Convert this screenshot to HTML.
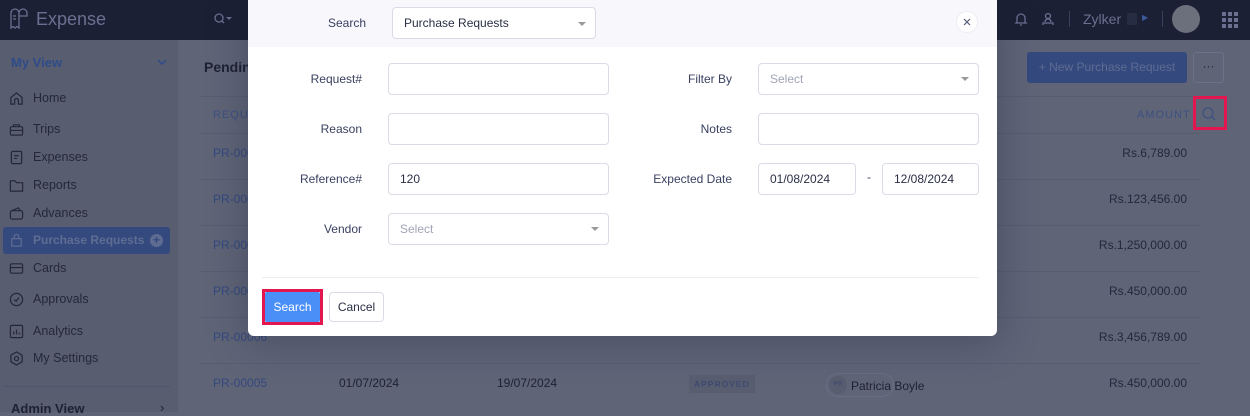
<!DOCTYPE html>
<html><head><meta charset="utf-8"><style>
*{box-sizing:border-box;margin:0;padding:0}
body{width:1250px;height:412px;overflow:hidden;position:relative;font-family:"Liberation Sans",sans-serif;background:#5f6477;font-size:12px}
.top{position:absolute;left:0;top:0;width:1250px;height:40px;background:#1b2035}
.side{position:absolute;left:0;top:40px;width:178px;height:372px;background:#585d6f}
.abs{position:absolute}
.nav{position:absolute;left:33px;color:#23283a;font-size:12.5px}
.ic{position:absolute;left:9px}
.row{position:absolute;left:200px;width:1000px;border-top:1px solid #585d70}
.pr{position:absolute;left:213px;color:#34497e;font-size:12px}
.amt{position:absolute;right:63px;color:#23283a;font-size:12px}
.modal{position:absolute;left:248px;top:0;width:749px;height:336px;background:#fff;border-radius:0 0 6px 6px;box-shadow:0 4px 40px rgba(30,35,55,.35)}
.mh{position:absolute;left:0;top:0;width:749px;height:47px;background:#f7f7fc}
.lbl{position:absolute;color:#3a4060;font-size:12px;text-align:right}
.inp{position:absolute;height:32px;border:1px solid #d9dbe6;border-radius:4px;background:#fff;font-size:12px;color:#2a2f45;padding-left:11px;line-height:30px}
.ph{color:#a1a5b5}
.car{position:absolute;right:9px;top:13px;border-left:4px solid transparent;border-right:4px solid transparent;border-top:4px solid #999}
</style></head><body>
<div class="top">
 <svg class="abs" style="left:8px;top:6px" width="24" height="26" viewBox="0 0 24 26" fill="none" stroke="#6b7090" stroke-width="1.3"><path d="M3 22V7a4 4 0 0 1 8 0v15l-2-1.5-2 1.5-2-1.5z M11 7a4 4 0 0 1 8 0v3h-8"/><path d="M5 10h3M5 13h3"/></svg>
 <div class="abs" style="left:36px;top:9px;color:#6b7090;font-size:18px">Expense</div>
 <svg class="abs" style="left:213px;top:12px" width="20" height="14" viewBox="0 0 20 14" fill="none" stroke="#6b7090" stroke-width="1.3"><circle cx="6" cy="6" r="4"/><path d="M9 9l2 2"/><path d="M13 5h6l-3 3z" fill="#6b7090" stroke="none"/></svg>
 <svg class="abs" style="left:1013px;top:11px" width="16" height="16" viewBox="0 0 16 16" fill="none" stroke="#6b7090" stroke-width="1.3"><path d="M4 11V7a4 4 0 0 1 8 0v4l1 1H3z M7 14h2"/></svg>
 <svg class="abs" style="left:1040px;top:11px" width="16" height="16" viewBox="0 0 16 16" fill="none" stroke="#6b7090" stroke-width="1.3"><circle cx="8" cy="5" r="2.5"/><path d="M3 14v-2h10v2M5 11a3 3 0 0 1 6 0"/></svg>
 <div class="abs" style="left:1069px;top:11px;width:1px;height:16px;background:#3a4060"></div>
 <div class="abs" style="left:1083px;top:11px;color:#6b7090;font-size:14px">Zylker</div>
 <div class="abs" style="left:1127px;top:13px;width:10px;height:12px;background:#262c42"></div>
 <div class="abs" style="left:1142px;top:13px;color:#3b5a9a;font-size:8px">▶</div>
 <div class="abs" style="left:1162px;top:11px;width:1px;height:16px;background:#3a4060"></div>
 <div class="abs" style="left:1172px;top:5px;width:28px;height:28px;border-radius:50%;background:#6c6f7c"></div>
 <svg class="abs" style="left:1222px;top:12px" width="16" height="16" viewBox="0 0 16 16" fill="#6b7090"><rect x="0" y="0" width="4" height="4"/><rect x="6" y="0" width="4" height="4"/><rect x="12" y="0" width="4" height="4"/><rect x="0" y="6" width="4" height="4"/><rect x="6" y="6" width="4" height="4"/><rect x="12" y="6" width="4" height="4"/><rect x="0" y="12" width="4" height="4"/><rect x="6" y="12" width="4" height="4"/><rect x="12" y="12" width="4" height="4"/></svg>
</div>
<div class="side">
 <div class="abs" style="left:11px;top:15px;color:#2f4c8a;font-weight:bold;font-size:13px">My View</div>
 <svg class="abs" style="left:157px;top:19px" width="10" height="6" viewBox="0 0 10 6" fill="none" stroke="#2f4c8a" stroke-width="1.5"><path d="M1 1l4 4 4-4"/></svg>
 <svg class="ic" style="top:51px" width="15" height="15" viewBox="0 0 16 16" fill="none" stroke="#23283a" stroke-width="1.3"><path d="M2 7l6-5 6 5v7H10v-4a2 2 0 0 0-4 0v4H2z"/></svg><div class="nav" style="top:51px">Home</div>
 <svg class="ic" style="top:82px" width="15" height="15" viewBox="0 0 16 16" fill="none" stroke="#23283a" stroke-width="1.3"><rect x="1.5" y="5" width="13" height="9" rx="1.5"/><path d="M5 5V3h6v2M1.5 9h13"/></svg><div class="nav" style="top:82px">Trips</div>
 <svg class="ic" style="top:110px" width="15" height="15" viewBox="0 0 16 16" fill="none" stroke="#23283a" stroke-width="1.3"><rect x="2.5" y="1.5" width="11" height="13" rx="1.5"/><path d="M5.5 6h5M5.5 9h3"/></svg><div class="nav" style="top:110px">Expenses</div>
 <svg class="ic" style="top:138px" width="15" height="15" viewBox="0 0 16 16" fill="none" stroke="#23283a" stroke-width="1.3"><path d="M1.5 3h5l1.5 2h6.5v9h-13z"/></svg><div class="nav" style="top:138px">Reports</div>
 <svg class="ic" style="top:166px" width="15" height="15" viewBox="0 0 16 16" fill="none" stroke="#23283a" stroke-width="1.3"><rect x="1.5" y="5" width="13" height="9" rx="2"/><path d="M3 5l7-3 2 3"/></svg><div class="nav" style="top:166px">Advances</div>
 <div class="abs" style="left:3px;top:187px;width:167px;height:27px;background:#34497e;border-radius:3px"></div>
 <svg class="ic" style="top:193px" width="15" height="15" viewBox="0 0 16 16" fill="none" stroke="#5f6c92" stroke-width="1.3"><path d="M3 6h10v8H3z M5.5 6V4a2.5 2.5 0 0 1 5 0v2"/></svg><div class="nav" style="top:193px;color:#5f6c92;font-weight:bold;font-size:12px">Purchase Requests</div>
 <div class="abs" style="left:150px;top:194px;width:13px;height:13px;border-radius:50%;background:#5f6c92;color:#34497e;font-size:12px;line-height:13px;text-align:center;font-weight:bold">+</div>
 <svg class="ic" style="top:221px" width="15" height="15" viewBox="0 0 16 16" fill="none" stroke="#23283a" stroke-width="1.3"><rect x="1.5" y="3" width="13" height="10" rx="1.5"/><path d="M1.5 7h13"/></svg><div class="nav" style="top:221px">Cards</div>
 <svg class="ic" style="top:252px" width="15" height="15" viewBox="0 0 16 16" fill="none" stroke="#23283a" stroke-width="1.3"><circle cx="8" cy="8" r="6.5"/><path d="M5.5 8l2 2 3-4"/></svg><div class="nav" style="top:252px">Approvals</div>
 <svg class="ic" style="top:284px" width="15" height="15" viewBox="0 0 16 16" fill="none" stroke="#23283a" stroke-width="1.3"><rect x="1.5" y="1.5" width="13" height="13" rx="1.5"/><path d="M5 11V8M8 11V6M11 11V9"/></svg><div class="nav" style="top:284px">Analytics</div>
 <svg class="ic" style="top:311px" width="15" height="15" viewBox="0 0 16 16" fill="none" stroke="#23283a" stroke-width="1.3"><path d="M8 1l6 3.5v7L8 15l-6-3.5v-7z"/><circle cx="8" cy="8" r="2.2"/></svg><div class="nav" style="top:311px">My Settings</div>
 <div class="abs" style="left:3px;top:346px;width:167px;border-top:1px solid #50566a"></div>
 <div class="abs" style="left:11px;top:361px;color:#1d2233;font-weight:bold;font-size:13px">Admin View</div>
 <div class="abs" style="left:160px;top:360px;color:#1d2233;font-size:13px">›</div>
</div>
<div class="abs" style="left:204px;top:59px;color:#1d2233;font-size:14px;font-weight:bold">Pending</div>
<div class="abs" style="left:1027px;top:52px;width:160px;height:31px;background:#34497e;border-radius:3px;color:#5f6c92;font-size:12px;line-height:31px;text-align:center">+ New Purchase Request</div>
<div class="abs" style="left:1193px;top:52px;width:31px;height:31px;border:1px solid #6d7286;border-radius:3px;color:#23283a;text-align:center;line-height:26px">···</div>
<div class="row" style="top:96px"></div>
<div class="abs" style="left:213px;top:109px;color:#3e5182;font-size:11px;letter-spacing:1px">REQUEST#</div>
<div class="abs" style="left:1137px;top:109px;color:#3e5182;font-size:11px;letter-spacing:1px">AMOUNT</div>
<div class="abs" style="left:1193px;top:96px;width:34px;height:34px;border:3px solid #e4164f"></div>
<svg class="abs" style="left:1201px;top:106px" width="16" height="16" viewBox="0 0 16 16" fill="none" stroke="#3e5182" stroke-width="1.3"><circle cx="7" cy="7" r="5"/><path d="M11 11l3 3"/></svg>
<div class="row" style="top:133px"></div>
<div class="pr" style="top:146px">PR-00010</div><div class="amt" style="top:146px">Rs.6,789.00</div>
<div class="row" style="top:179px"></div>
<div class="pr" style="top:192px">PR-00009</div><div class="amt" style="top:192px">Rs.123,456.00</div>
<div class="row" style="top:225px"></div>
<div class="pr" style="top:238px">PR-00008</div><div class="amt" style="top:238px">Rs.1,250,000.00</div>
<div class="row" style="top:271px"></div>
<div class="pr" style="top:284px">PR-00007</div><div class="amt" style="top:284px">Rs.450,000.00</div>
<div class="row" style="top:317px"></div>
<div class="pr" style="top:330px">PR-00006</div><div class="amt" style="top:330px">Rs.3,456,789.00</div>
<div class="row" style="top:363px"></div>
<div class="pr" style="top:376px">PR-00005</div>
<div class="abs" style="left:339px;top:376px;color:#1d2233">01/07/2024</div>
<div class="abs" style="left:497px;top:376px;color:#1d2233">19/07/2024</div>
<div class="abs" style="left:689px;top:375px;background:#585d70;color:#3e4a70;font-size:8.5px;letter-spacing:1px;padding:4px 5px;font-weight:bold">APPROVED</div>
<div class="abs" style="left:826px;top:373px;width:68px;height:24px;border:1px solid #6a6f82;border-radius:12px"></div>
<div class="abs" style="left:829px;top:376px;width:18px;height:18px;border-radius:50%;background:#585d70;color:#3e4a70;font-size:7px;line-height:18px;text-align:center">PB</div>
<div class="abs" style="left:851px;top:379px;color:#1d2233">Patricia Boyle</div>
<div class="amt" style="top:376px">Rs.450,000.00</div>

<div class="modal">
 <div class="mh"></div>
 <div class="lbl" style="left:60px;width:58px;top:16px">Search</div>
 <div class="inp" style="left:144px;top:7px;width:204px;height:32px">Purchase Requests<div class="car" style="top:14px"></div></div>
 <div class="abs" style="left:708px;top:11px;width:22px;height:22px;border-radius:50%;background:#fff;border:1px solid #eceef4"></div>
 <svg class="abs" style="left:715px;top:18px" width="8" height="8" viewBox="0 0 8 8" stroke="#555a75" stroke-width="1.2"><path d="M1 1l6 6M7 1l-6 6"/></svg>

 <div class="lbl" style="left:0;width:114px;top:72px">Request#</div>
 <div class="inp" style="left:140px;top:63px;width:221px"></div>
 <div class="lbl" style="left:0;width:114px;top:122px">Reason</div>
 <div class="inp" style="left:140px;top:113px;width:221px"></div>
 <div class="lbl" style="left:0;width:114px;top:172px">Reference#</div>
 <div class="inp" style="left:140px;top:163px;width:221px">120</div>
 <div class="lbl" style="left:0;width:114px;top:222px">Vendor</div>
 <div class="inp ph" style="left:140px;top:213px;width:221px">Select<div class="car"></div></div>

 <div class="lbl" style="left:380px;width:104px;top:72px">Filter By</div>
 <div class="inp ph" style="left:510px;top:63px;width:221px">Select<div class="car"></div></div>
 <div class="lbl" style="left:380px;width:104px;top:122px">Notes</div>
 <div class="inp" style="left:510px;top:113px;width:221px"></div>
 <div class="lbl" style="left:380px;width:104px;top:172px">Expected Date</div>
 <div class="inp" style="left:510px;top:163px;width:98px">01/08/2024</div>
 <div class="abs" style="left:619px;top:170px;color:#3a4060">-</div>
 <div class="inp" style="left:634px;top:163px;width:97px">12/08/2024</div>

 <div class="abs" style="left:14px;top:277px;width:717px;border-top:1px solid #eceef4"></div>
 <div class="abs" style="left:14px;top:289px;width:61px;height:36px;border:3px solid #e4164f"></div>
 <div class="abs" style="left:17px;top:292px;width:55px;height:30px;background:#4a8ff7;border-radius:2px;color:#fff;text-align:center;line-height:30px;font-size:12px">Search</div>
 <div class="abs" style="left:81px;top:292px;width:55px;height:30px;border:1px solid #d9dbe6;border-radius:4px;color:#2a2f45;text-align:center;line-height:28px;font-size:12px">Cancel</div>
</div>
</body></html>
